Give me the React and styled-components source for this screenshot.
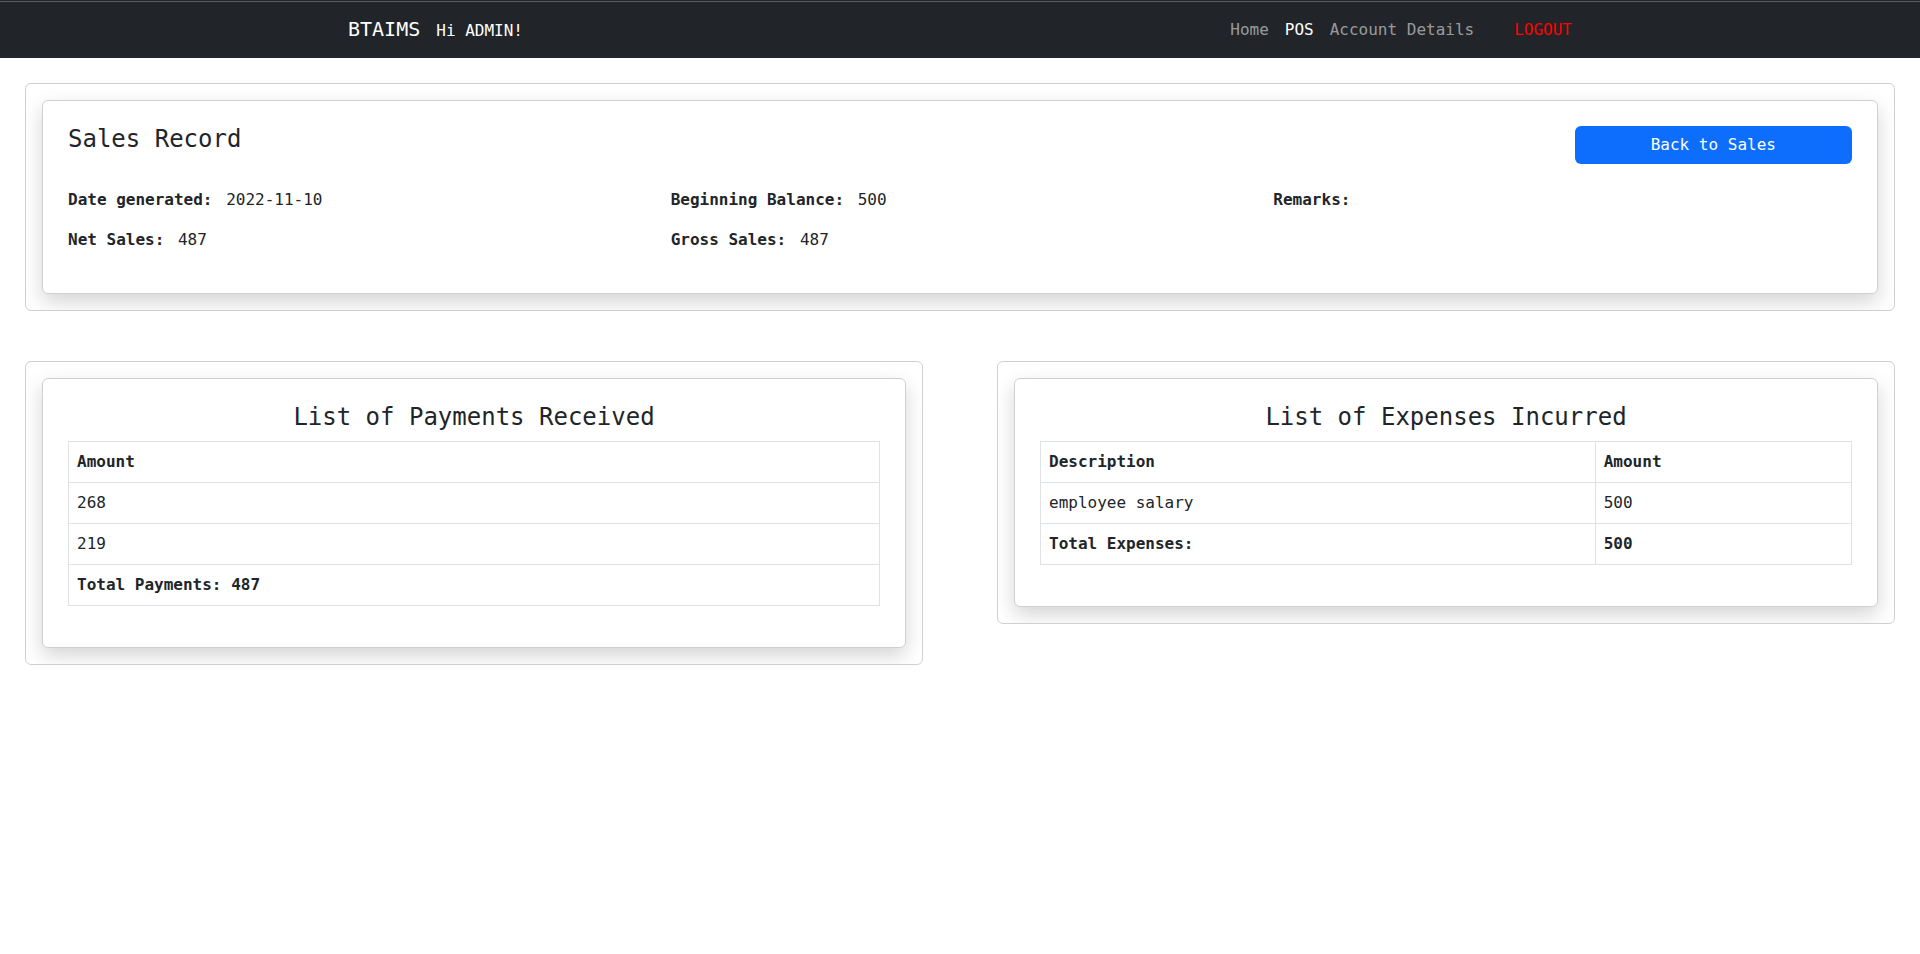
import React from 'react';
import styled, { createGlobalStyle } from 'styled-components';

const GlobalStyle = createGlobalStyle`
  *, *::before, *::after { box-sizing: border-box; }
  body {
    margin: 0;
    background: #fff;
    color: #212529;
    font-family: 'DejaVu Sans Mono', 'Liberation Mono', monospace;
    font-size: 16px;
    line-height: 24px;
  }
`;

const NavBar = styled.header`
  height: 58px;
  padding: 2px 24px 0;
  background: linear-gradient(#212529 1px, #5a5c5f 1px, #5a5c5f 2px, #212529 2px);
`;

const NavInner = styled.div`
  display: flex;
  align-items: center;
  justify-content: space-between;
  max-width: 1224px;
  height: 100%;
  margin: 0 auto;
`;

const NavGroup = styled.nav`
  display: flex;
  align-items: baseline;
  gap: 16px;
`;

const Brand = styled.a`
  color: #fff;
  font-size: 20px;
  text-decoration: none;
`;

const Greeting = styled.span`
  color: #fff;
`;

const NavLink = styled.a`
  color: ${({ $active }) => ($active ? '#fff' : 'rgba(255, 255, 255, 0.55)')};
  text-decoration: none;
`;

const LogoutLink = styled(NavLink)`
  margin-left: 24px;
  color: #f00;
`;

const Page = styled.main`
  display: grid;
  gap: 50px;
  padding: 25px;
`;

const Frame = styled.section`
  padding: 16px;
  border: 1px solid #d0d0d0;
  border-radius: 6px;
  background: #fff;
  overflow: hidden;
`;

const Card = styled.div`
  padding: 25px;
  border: 1px solid #d0d0d0;
  border-radius: 6px;
  background: #fff;
  box-shadow: 0 8px 20px rgba(0, 0, 0, 0.17);
`;

const CardHeader = styled.div`
  display: grid;
  grid-template-columns: repeat(6, 1fr);
  gap: 24px;
  align-items: start;
  margin-bottom: 24px;
`;

const Title = styled.h1`
  grid-column: span 5;
  margin: 0;
  font-size: 24px;
  font-weight: 400;
  line-height: 26px;
`;

const ListTitle = styled.h2`
  margin: 0 0 11px;
  font-size: 24px;
  font-weight: 400;
  line-height: 26px;
  text-align: center;
`;

const BackButton = styled.button`
  height: 38px;
  padding: 0 12px;
  border: 0;
  border-radius: 6px;
  background: #0d6efd;
  color: #fff;
  font: inherit;
  cursor: pointer;
`;

const Facts = styled.div`
  display: grid;
  grid-template-columns: repeat(3, 1fr);
  column-gap: 24px;
`;

const Fact = styled.p`
  margin: 0 0 16px;
`;

const FactLabel = styled.b`
  margin-right: 4px;
`;

const Lists = styled.div`
  display: grid;
  grid-template-columns: repeat(2, 1fr);
  gap: 74px;
  align-items: start;
`;

const Table = styled.table`
  width: 100%;
  margin-bottom: 16px;
  border-collapse: collapse;
  text-align: left;
`;

const cell = `
  padding: 8px;
  border: 1px solid #dee2e6;
`;

const HeadCell = styled.th`
  ${cell}
  width: ${({ $width }) => $width || 'auto'};
`;

const Cell = styled.td`
  ${cell}
`;

const facts = [
  { label: 'Date generated:', value: '2022-11-10' },
  { label: 'Beginning Balance:', value: '500' },
  { label: 'Remarks:', value: '' },
  { label: 'Net Sales:', value: '487' },
  { label: 'Gross Sales:', value: '487' },
];
const payments = ['268', '219'];
const expenses = [{ description: 'employee salary', amount: '500' }];

export default function App() {
  return (
    <>
      <GlobalStyle />
      <NavBar>
        <NavInner>
          <NavGroup as="div">
            <Brand href="#">BTAIMS</Brand>
            <Greeting>Hi ADMIN!</Greeting>
          </NavGroup>
          <NavGroup>
            <NavLink href="#home">Home</NavLink>
            <NavLink href="#pos" $active>POS</NavLink>
            <NavLink href="#account">Account Details</NavLink>
            <LogoutLink href="#logout">LOGOUT</LogoutLink>
          </NavGroup>
        </NavInner>
      </NavBar>
      <Page>
        <Frame>
          <Card>
            <CardHeader>
              <Title>Sales Record</Title>
              <BackButton type="button">Back to Sales</BackButton>
            </CardHeader>
            <Facts>
              {facts.map(({ label, value }) => (
                <Fact key={label}>
                  <FactLabel>{label}</FactLabel> {value}
                </Fact>
              ))}
            </Facts>
          </Card>
        </Frame>
        <Lists>
          <Frame>
            <Card>
              <ListTitle>List of Payments Received</ListTitle>
              <Table>
                <thead>
                  <tr><HeadCell scope="col">Amount</HeadCell></tr>
                </thead>
                <tbody>
                  {payments.map((amount) => (
                    <tr key={amount}><Cell>{amount}</Cell></tr>
                  ))}
                </tbody>
                <tfoot>
                  <tr><HeadCell>Total Payments: 487</HeadCell></tr>
                </tfoot>
              </Table>
            </Card>
          </Frame>
          <Frame>
            <Card>
              <ListTitle>List of Expenses Incurred</ListTitle>
              <Table>
                <thead>
                  <tr>
                    <HeadCell scope="col" $width="68.4%">Description</HeadCell>
                    <HeadCell scope="col">Amount</HeadCell>
                  </tr>
                </thead>
                <tbody>
                  {expenses.map(({ description, amount }) => (
                    <tr key={description}>
                      <Cell>{description}</Cell>
                      <Cell>{amount}</Cell>
                    </tr>
                  ))}
                </tbody>
                <tfoot>
                  <tr>
                    <HeadCell scope="row">Total Expenses:</HeadCell>
                    <HeadCell>500</HeadCell>
                  </tr>
                </tfoot>
              </Table>
            </Card>
          </Frame>
        </Lists>
      </Page>
    </>
  );
}
